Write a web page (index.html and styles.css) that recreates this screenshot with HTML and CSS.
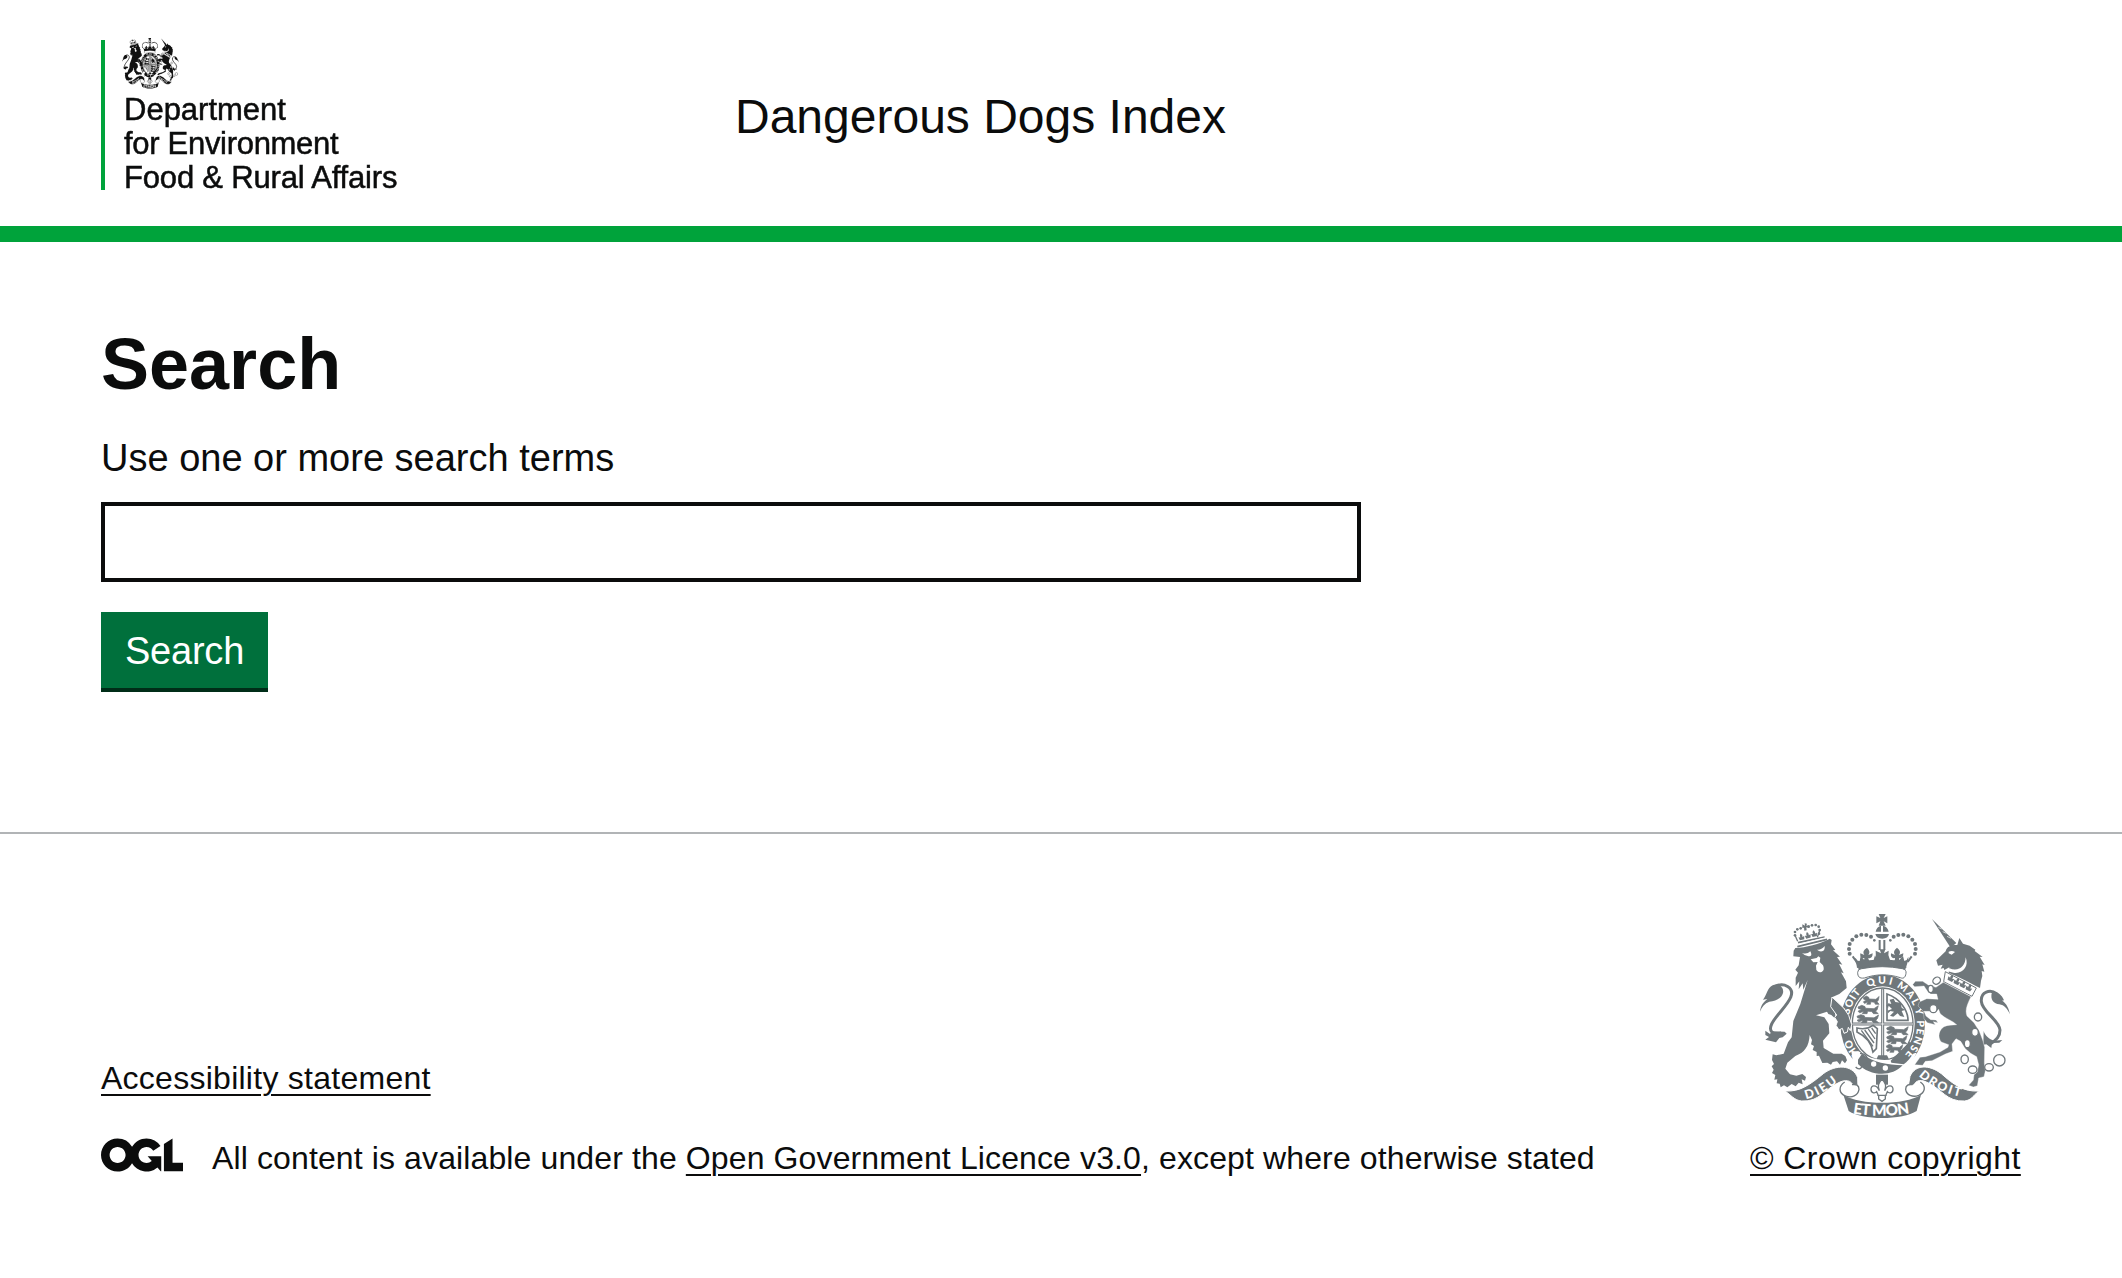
FILE: index.html
```html
<!DOCTYPE html>
<html lang="en">
<head>
<meta charset="utf-8">
<title>Dangerous Dogs Index</title>
<link rel="stylesheet" href="styles.css">
</head>
<body>
<header class="header">
  <div class="container header-inner">
    <div class="department">
      <svg class="department-crest" viewBox="58 52 754 608" preserveAspectRatio="none" aria-hidden="true"><use href="#arms"/></svg>
      <div class="department-name"><span class="line-one">Department</span><span class="line-two">for Environment</span><span class="line-three">Food &amp; Rural Affairs</span></div>
    </div>
    <div class="service-name">Dangerous Dogs Index</div>
  </div>
</header>
<main class="container main">
  <h1 class="heading">Search</h1>
  <form class="form">
    <label class="label" for="terms">Use one or more search terms</label>
    <input class="input" id="terms" type="text">
    <button class="button" type="button">Search</button>
  </form>
</main>
<footer class="footer">
  <div class="container footer-inner">
    <div class="footer-meta">
      <a class="link accessibility" href="#">Accessibility statement</a>
      <div class="licence">
        <svg class="ogl" viewBox="0 0 483.2 195.7" aria-label="Open Government Licence"><path d="M421.5 142.8V.1l-50.7 32.3v161.1h112.4v-50.7zm-122.3-9.6A47.12 47.12 0 0 1 221 97.8c0-26 21.1-47.1 47.1-47.1 16.7 0 31.4 8.7 39.7 21.8l42.7-27.2A97.63 97.63 0 0 0 268.1 0c-36.5 0-68.3 20.1-85.1 49.7A98 98 0 0 0 97.8 0C43.9 0 0 43.9 0 97.8s43.9 97.8 97.8 97.8c36.5 0 68.3-20.1 85.1-49.7a97.76 97.76 0 0 0 149.6 25.4l19.4 22.2h3v-87.8h-80l24.3 27.5zM97.8 145c-26 0-47.1-21.1-47.1-47.1s21.1-47.1 47.1-47.1 47.1 21.1 47.1 47.1S123.8 145 97.8 145"/></svg>
        <span class="licence-text">All content is available under the <a class="link" href="#">Open Government Licence v3.0</a>, except where otherwise stated</span>
      </div>
    </div>
    <div class="copyright">
      <svg class="arms" viewBox="30 0 813 690" aria-hidden="true">
        <defs>
          <g id="small-lion">
            <path d="M0 4l7-4 6 3 1 4 16 1 8-7-2 9-3 4 5 6h-9l-3-5-8-1-1 6H8l3-6-8 4-3-4 7-4-6-2z"/>
          </g>
          <g id="sprig"><path d="M0-20c5 6 7 10 4 16l9-2-3 14h-20l-3-14 9 2c-3-6-1-10 4-16z"/></g>
          <path id="motto" d="M134 463A103 121 0 0 1 134 221A103 121 0 0 1 134 463"/>
          <path id="left-scroll" d="M198 597Q248 588 311 530"/>
          <path id="mid-scroll" d="M338 640Q428 656 520 637"/>
          <path id="right-scroll" d="M536 528Q585 575 675 594"/>
        </defs>
        <g id="arms" fill="currentColor">
          <!-- lion's tail and body -->
          <g transform="translate(48 60)">
            <path d="M54 201C84 184 116 203 104 232C94 258 60 285 47 312C37 334 50 346 76 339" fill="none" stroke="currentColor" stroke-width="9"/>
            <path d="M12 275C15 255 22 247 34 237L21 239C33 224 33 205 50 196C66 188 85 201 81 219C76 237 58 243 40 245C26 250 18 260 12 275z"/>
            <path d="M28 332L42 342L47 334L86 335L92 341L80 352L70 354L60 367L28 359L39 351L28 345z"/>
            <path d="M113 92L118 84C150 82 190 73 221 56L227 60L225 73L238 90L231 91L252 110L243 111L259 134L249 131L263 160L255 157L270 184L272 204L250 222L228 232L246 262L262 284L236 272L240 298L226 285L217 282L213 275L180 286L205 292L218 312L220 340L201 362L203 384L232 401L257 401L268 408L273 421L267 430L258 421L252 434L243 424L230 426L225 434L214 428L199 429L189 407L182 408L182 396L170 390L174 378L165 373L168 360L161 345C159 380 145 398 118 408L94 428L88 446L102 463L121 467L139 462L150 471L147 482L137 478L140 493L128 488L119 499L107 492L94 502L84 496L74 502L71 491L62 490L64 478L55 479L58 465L48 459L53 449L47 439L54 432L48 420L50 403L61 406L83 401L96 367L107 352L112 303L133 252L155 180L142 209L140 190L128 208L130 184L119 198L119 173L126 158L118 149L128 136L132 111L112 109z"/>
            <path d="M138 99Q153 104 163 94Q169 106 163 108Q151 112 138 99zM183 89Q195 91 206 78Q207 90 201 93Q192 97 183 89zM164 118L182 114L187 109L193 113L191 126L201 136Q207 150 198 155Q188 160 181 150L180 137L185 126L172 127z" fill="#fff"/>
            <path d="M126 68L206 51M124 80L213 58" fill="none" stroke="currentColor" stroke-width="5"/>
            <path d="M124 74L210 53" stroke="#fff" stroke-width="3"/>
            <path d="M125 64L117 46M184 52L191 32" fill="none" stroke="currentColor" stroke-width="4"/>
            <circle cx="117" cy="46" r="4"/><circle cx="117" cy="36" r="4"/><circle cx="124" cy="28" r="4"/><circle cx="134" cy="25" r="4"/><circle cx="158" cy="20" r="4"/><circle cx="168" cy="16" r="4"/><circle cx="179" cy="15" r="4"/><circle cx="188" cy="20" r="4"/><circle cx="191" cy="30" r="4"/><circle cx="189" cy="41" r="4"/>
            <path d="M139 13l8 4-1-7 7 1-2 6 9-1-1 7-8-1 1 9-7 1-1-9-5 1z"/>
            <use href="#sprig" transform="translate(137 54) rotate(-14) scale(.68)"/><use href="#sprig" transform="translate(156 49) rotate(-14) scale(.68)"/><use href="#sprig" transform="translate(175 44) rotate(-14) scale(.68)"/>
          </g>
          <!-- crown, garter and shield -->
          <g transform="translate(294 30)">
            <ellipse cx="134" cy="342" rx="132" ry="153" fill="#fff"/>
            <ellipse cx="134" cy="342" rx="127" ry="148"/>
            <ellipse cx="134" cy="342" rx="96" ry="113" fill="#fff"/>
            <ellipse cx="134" cy="342" rx="91" ry="108" fill="none" stroke="currentColor" stroke-width="4"/>
            <path d="M134 236v209M43 342h182" stroke="currentColor" stroke-width="9" fill="none"/>
            <path d="M134 238v205M43 342h182" stroke="#fff" stroke-width="2.5" fill="none"/>
            <g stroke="currentColor" stroke-width="1.5">
              <use href="#small-lion" transform="translate(76 258) scale(1.25)"/><use href="#small-lion" transform="translate(60 286) scale(1.6 1.25)"/><use href="#small-lion" transform="translate(57 314) scale(1.7 1.2)"/>
              <use href="#small-lion" transform="translate(146 349) scale(1.7 1.25)"/><use href="#small-lion" transform="translate(146 376) scale(1.6 1.25)"/><use href="#small-lion" transform="translate(145 403) scale(1.3 1.2)"/>
            </g>
            <path d="M147 252v79h63c0-31-25-66-63-79z" fill="none" stroke="currentColor" stroke-width="5"/>
            <path d="M155 269l12-3 5 10 16 2 3 15 10 7-10 3 8 18-13-3-7-8-13 10-10-3 12-12-11-2-7 7-2-8 14-5-10-10-2 8-5-8 6-7 9 2z"/>
            <path d="M57 354c19 5 37 0 48-8l13 10-3 60-10 10c-5-30-25-49-48-60z" fill="none" stroke="currentColor" stroke-width="5"/>
            <path d="M70 361l35 48M80 360l28 39M91 357l20 30M101 354l12 17" stroke="currentColor" stroke-width="4"/>
            <path d="M121 436h26l7 14h-40z"/>
            <!-- buckle and strap -->
            <path d="M40 424L62 424C100 452 150 458 192 438L236 428L215 470C170 510 90 510 46 466z" fill="#fff"/>
            <path d="M60 449L72 431C105 458 150 464 194 466C160 503 95 498 60 462z"/>
            <path d="M158 452L214 396L238 404C232 425 216 449 197 463L160 458z"/>
            <circle cx="107" cy="462" r="8" fill="#fff"/><circle cx="142" cy="474" r="8" fill="#fff"/>
            <path d="M66 430c17 1 25 12 21 23-4 10-13 8-16 16-2 10-12 9-18 2" fill="none" stroke="currentColor" stroke-width="4"/>
            <g fill="#fff" font-family="Lato, sans-serif" font-weight="900" font-size="31">
              <text><textPath href="#motto" startOffset="11.5%" textLength="49">HO</textPath></text>
              <text><textPath href="#motto" startOffset="29%" textLength="76">SOIT</textPath></text>
              <text><textPath href="#motto" startOffset="43.5%" textLength="73">QUI</textPath></text>
              <text><textPath href="#motto" startOffset="56%" textLength="78">MAL</textPath></text>
              <text><textPath href="#motto" startOffset="68.5%">Y</textPath></text>
              <text><textPath href="#motto" startOffset="73.5%" textLength="112">PENSE</textPath></text>
            </g>
            <path d="M57 159q75-22 149 0l-7 36c-45-14-91-14-133 0z"/>
            <path d="M59 187q0-10 12-11q62-12 122 0q13 3 11 14c-2 13-8 17-17 13-39-12-72-11-108 1-15 2-20-4-20-17z" fill="#fff" stroke="currentColor" stroke-width="3"/>
            <path d="M52 143l7 9 6 1 3-15 11 12 9-7 8 13 11-6 4-14 6 12 15-2 12 2 7-12 5 13 11 7 8-13 9 7 11-12 4 15 7-3 5-10c1 17-7 23-6 34q-74-21-148 0c0-14-8-21-5-31z"/>
            <path d="M87 113c7 8 10 13 4 22l13-5c0 13-6 16-13 14l1 12h-14l1-12c-9 2-14-4-12-14l12 5c-5-9-3-14 8-22zM177 113c9 8 12 13 6 22l13-5c0 13-6 16-13 14l1 12h-14l1-12c-9 2-14-4-12-14l12 5c-5-9-3-14 6-22z"/>
            <path d="M113 122l16 8-4-12h17l-4 12 14-8-2 30-12-4 3 9h-16l3-9-14 4z"/>
            <path d="M122 90h6v30h-6zM136 90h6v30h-6zM112 72h41q-3 14-20 14-18 0-21-14zM113 65q3-15 16-18v18zM135 47q14 3 17 18h-17z"/>
            <path d="M122 12h21l-6 12 11-5v21l-11-6 6 13h-21l5-13-12 6V19l12 5z"/>
            <g id="crown-dots"><circle cx="35" cy="131" r="6"/><circle cx="33" cy="117" r="6"/><circle cx="35" cy="102" r="6"/><circle cx="43" cy="89" r="6"/><circle cx="55" cy="79" r="6"/><circle cx="70" cy="74" r="6"/><circle cx="85" cy="75" r="6"/><circle cx="99" cy="80" r="6"/><circle cx="109" cy="91" r="4"/></g>
            <use href="#crown-dots" transform="matrix(-1 0 0 1 266 0)"/>
            <path d="M44 139l12 17M221 139l-12 17" stroke="currentColor" stroke-width="6"/>
          </g>
          <!-- lion's foreleg resting on the garter -->
          <path d="M276 291L312 325L326 346L335 374L331 392L325 382L322 396L312 400L307 385L297 390L288 376L292 365L284 352L290 345L272 320z" stroke="#fff" stroke-width="3"/>
          <!-- unicorn supporter -->
          <g transform="translate(516 42)">
            <path d="M254 239C234 225 206 233 208 262C210 294 262 318 264 348C264 368 253 378 236 389" fill="none" stroke="currentColor" stroke-width="9"/>
            <path d="M294 301C289 275 278 264 270 260L276 259C268 240 254 231 240 234C233 258 246 269 262 271C277 273 286 284 294 301z"/>
            <path d="M215 351C219 365 232 376 246 380L271 378L262 386L240 387L238 402L223 391L214 392z"/>
            <path d="M60 15L133 87L116 101z"/>
            <path d="M79 40l10 5M92 53l11 5M105 67l12 6" stroke="#fff" stroke-width="2"/>
            <path d="M73 139L101 112C104 97 119 92 136 93L142 72L153 89L173 95L190 107L188 111L212 129L203 128L218 153L211 151L217 173L209 171L211 186L207 200L204 222L190 215L168 203L140 190L110 176L112 160L97 168L95 162L86 164L92 152L78 155z"/>
            <path d="M110 113q10-5 19 1l-10 8-9-4zM112 163C140 174 160 158 161 130C172 157 152 181 124 176L108 172z" fill="#fff"/>
            <path d="M100 173l93 49-13 25-85-44z" fill="#fff" stroke="currentColor" stroke-width="3"/>
            <use href="#sprig" transform="translate(116 195) rotate(27) scale(.75)"/><use href="#sprig" transform="translate(134 205) rotate(27) scale(.75)"/><use href="#sprig" transform="translate(152 214) rotate(27) scale(.75)"/><use href="#sprig" transform="translate(170 224) rotate(27) scale(.75)"/>
            <path d="M94 205L177 248C166 270 158 288 165 306L186 326L202 352L212 378L218 400L217 448L220 470L216 488L200 492L196 515L184 519L170 514L184 498L186 482L196 474L200 452L194 428L176 418L160 404L146 382L132 374L120 390L122 412L100 420L60 440L40 442L32 454L8 452L24 430L40 428L84 414L108 400L110 392L88 384C76 370 80 348 96 338C108 332 122 334 134 332C120 318 98 314 84 298L80 286L68 297L54 292L36 292L42 306L56 317L72 318L78 326L64 323L70 332L46 326L36 314L34 292L18 276L22 264L44 254L78 256L74 240L56 240L44 228L36 216L8 218L2 212L10 202L32 202L50 214L72 220z" stroke="#fff" stroke-width="1"/>
            <g fill="#fff" stroke="currentColor" stroke-width="4"><ellipse cx="74" cy="200" rx="12" ry="10" transform="rotate(-35 74 200)"/><ellipse cx="56" cy="225" rx="8" ry="11"/><ellipse cx="64" cy="284" rx="11" ry="12"/><ellipse cx="198" cy="309" rx="11" ry="12"/><ellipse cx="189" cy="355" rx="10" ry="12"/><ellipse cx="166" cy="389" rx="9" ry="12"/><ellipse cx="158" cy="436" rx="11" ry="13"/><ellipse cx="182" cy="467" rx="13" ry="11"/><ellipse cx="231" cy="460" rx="13" ry="11"/><circle cx="262" cy="439" r="17"/></g>
          </g>
          <!-- scrolls -->
          <path d="M135 573c45 3 75-19 115-52 37-28 88-28 103 12l1 31c-3 4-8 5-12 2-3-21-18-30-42-20-48 21-60 60-115 57-22-2-32-18-50-30z" stroke="#fff" stroke-width="3"/>
          <path d="M716 573c-45 3-75-19-112-52-37-28-78-28-94 8l-6 34c6 7 9 5 15 1 4-21 19-28 40-18 48 21 60 60 115 57 20-2 28-18 42-30z" stroke="#fff" stroke-width="3"/>
          <path d="M314 546c-18 12-20 33 3 42 18 7 37-1 40-20 0-13-9-16-21-14M541 546c18 12 15 31-5 40-18 7-37-1-39-18 0-13 9-16 21-14" fill="#fff" stroke="currentColor" stroke-width="4"/>
          <path d="M310 584C360 616 493 616 543 584L530 633C490 660 368 662 326 633z"/>
          <g fill="#fff" font-family="Lato, sans-serif" font-weight="900">
            <text font-size="37"><textPath href="#left-scroll" textLength="108">DIEU</textPath></text>
            <text font-size="46"><textPath href="#mid-scroll" textLength="172">ET MON</textPath></text>
            <text font-size="37"><textPath href="#right-scroll" textLength="140">DROIT</textPath></text>
          </g>
          <!-- fleur-de-lis -->
          <path d="M408 524h36v30h-36z"/>
          <path d="M426 538c11 11 14 19 8 34 9-20 26-17 25-3-1 12-13 11-17 6l-6 14v8l-10 7-10-7v-8l-6-14c-4 5-16 6-17-6-1-14 16-17 25 3-6-15-3-23 8-34zM412 586h28" fill="#fff" stroke="currentColor" stroke-width="4"/>
        </g>
      </svg>
      <a class="link crown" href="#">© Crown copyright</a>
    </div>
  </div>
</footer>
</body>
</html>
```
FILE: styles.css
```css
* { box-sizing: border-box; }
body {
  margin: 0;
  background: #fff;
  color: #0b0c0c;
  font-family: "Liberation Sans", Arial, sans-serif;
  font-size: 32px;
  line-height: 40px;
}
.container { width: 1920px; margin: 0 auto; }
.header { height: 242px; border-bottom: 16px solid #00a33b; }
.header-inner { display: flex; padding-top: 40px; }
.department {
  width: 296px;
  height: 150px;
  margin-right: 338px;
  padding-left: 17px;
  border-left: 4px solid #00a33b;
}
.department-crest {
  display: block;
  width: 57px;
  height: 51px;
  margin-top: -2px;
  color: #111;
  filter: blur(.7px);
}
.department-name {
  display: flex;
  flex-direction: column;
  margin-top: 4px;
  padding-left: 2px;
  font-size: 31px;
  line-height: 34px;
  white-space: nowrap;
  -webkit-text-stroke: .5px #0b0c0c;
  filter: blur(.6px);
}
.line-two { letter-spacing: -.3px; }
.line-three { letter-spacing: -.18px; }
.service-name { padding-top: 47px; font-size: 48px; line-height: 60px; }
.main { height: 590px; padding-top: 85px; }
.heading { margin: 0 0 31px; font-size: 72px; line-height: 75px; font-weight: 700; }
.form { display: flex; flex-direction: column; align-items: flex-start; }
.label { font-size: 38px; line-height: 50px; margin-bottom: 19px; }
.input {
  width: 1260px;
  height: 80px;
  margin: 0 0 30px;
  padding: 10px;
  border: 4px solid #0b0c0c;
  border-radius: 0;
  background: #fff;
  font: inherit;
}
.button {
  width: 167px;
  height: 80px;
  margin: 0;
  padding: 2px 0 0;
  border: 0;
  border-bottom: 4px solid #002d18;
  border-radius: 0;
  background: #00703c;
  color: #fff;
  font: 38px/38px "Liberation Sans", Arial, sans-serif;
  letter-spacing: -.2px;
}
.footer { border-top: 2px solid #b1b4b6; }
.footer-inner { display: flex; justify-content: space-between; align-items: flex-end; padding-top: 66px; }
.footer-meta { display: flex; flex-direction: column; align-items: flex-start; }
.link {
  color: inherit;
  text-decoration: underline;
  text-decoration-thickness: 2px;
  text-underline-offset: 5px;
}
.accessibility { margin-bottom: 40px; letter-spacing: .26px; }
.licence { display: flex; align-items: flex-start; gap: 29px; }
.ogl { width: 82px; height: 34px; fill: #0b0c0c; }
.licence-text { letter-spacing: .12px; white-space: nowrap; }
.copyright { display: flex; flex-direction: column; width: 271px; }
.arms { width: 271px; height: 230px; margin-bottom: 8px; color: #6f777b; }
.crown { letter-spacing: .42px; white-space: nowrap; }
```
